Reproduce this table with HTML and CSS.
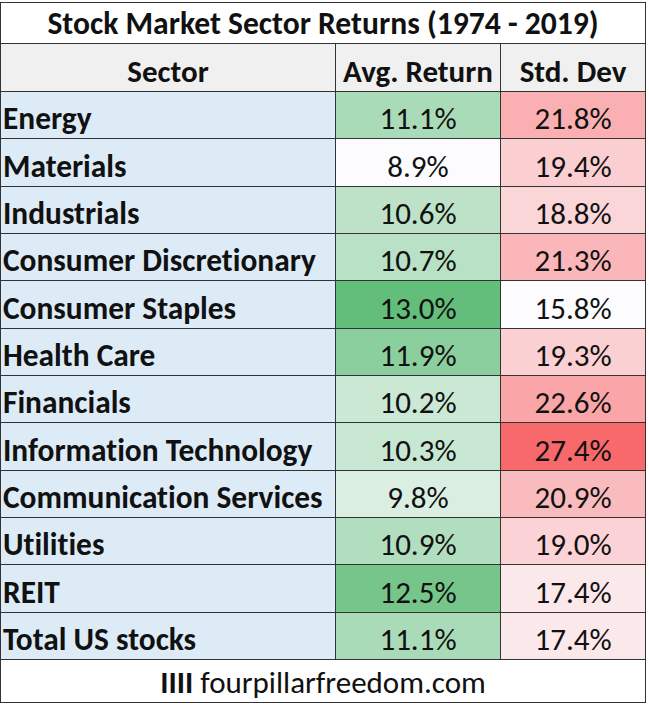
FILE: index.html
```html
<!DOCTYPE html>
<html>
<head>
<meta charset="utf-8">
<link rel="stylesheet" href="styles.css">
</head>
<body>
<table class="sheet">
  <colgroup>
    <col class="c-sector">
    <col class="c-ret">
    <col class="c-dev">
  </colgroup>
  <tr class="title"><td colspan="3">Stock Market Sector Returns (1974 - 2019)</td></tr>
  <tr class="head"><th>Sector</th><th>Avg. Return</th><th>Std. Dev</th></tr>
  <tr><td class="sector">Energy</td><td class="num" style="background:#aadbb8">11.1%</td><td class="num" style="background:#fab0b2">21.8%</td></tr>
  <tr><td class="sector">Materials</td><td class="num" style="background:#fcfcff">8.9%</td><td class="num" style="background:#fbced1">19.4%</td></tr>
  <tr><td class="sector">Industrials</td><td class="num" style="background:#bde2c8">10.6%</td><td class="num" style="background:#fbd6d9">18.8%</td></tr>
  <tr><td class="sector">Consumer Discretionary</td><td class="num" style="background:#b9e1c5">10.7%</td><td class="num" style="background:#fab6b9">21.3%</td></tr>
  <tr><td class="sector">Consumer Staples</td><td class="num" style="background:#63be7b">13.0%</td><td class="num" style="background:#fcfcff">15.8%</td></tr>
  <tr><td class="sector">Health Care</td><td class="num" style="background:#8ccf9e">11.9%</td><td class="num" style="background:#fbd0d2">19.3%</td></tr>
  <tr><td class="sector">Financials</td><td class="num" style="background:#cbe8d5">10.2%</td><td class="num" style="background:#faa6a8">22.6%</td></tr>
  <tr><td class="sector">Information Technology</td><td class="num" style="background:#c8e7d2">10.3%</td><td class="num" style="background:#f8696b">27.4%</td></tr>
  <tr><td class="sector">Communication Services</td><td class="num" style="background:#daeee2">9.8%</td><td class="num" style="background:#fabbbe">20.9%</td></tr>
  <tr><td class="sector">Utilities</td><td class="num" style="background:#b1debf">10.9%</td><td class="num" style="background:#fbd3d6">19.0%</td></tr>
  <tr><td class="sector">REIT</td><td class="num" style="background:#76c68b">12.5%</td><td class="num" style="background:#fbe8eb">17.4%</td></tr>
  <tr><td class="sector">Total US stocks</td><td class="num" style="background:#aadbb8">11.1%</td><td class="num" style="background:#fbe8eb">17.4%</td></tr>
  <tr class="foot"><td colspan="3"><b>IIII</b> fourpillarfreedom.com</td></tr>
</table>
</body>
</html>
```

FILE: styles.css
```css
html, body {
  margin: 0;
  padding: 0;
  background: #ffffff;
}

body {
  padding-top: 2px;
  font-family: Carlito, Calibri, Lato, sans-serif;
  font-variant-ligatures: none;
  color: #111111;
}

.sheet {
  border-collapse: collapse;
  table-layout: fixed;
  width: 645px;
  border: 1px solid #555555;
}

.c-sector { width: 335px; }
.c-ret { width: 165px; }
.c-dev { width: 145px; }

.sheet td,
.sheet th {
  border: 1px solid #333333;
  padding: 0 4px 2px 4px;
  font-size: 31px;
  line-height: 36px;
  vertical-align: bottom;
  white-space: nowrap;
  overflow: hidden;
}

.title td {
  height: 38px;
  text-align: center;
  font-weight: bold;
  font-size: 31.6px;
  background: #ffffff;
}

.head th {
  height: 45px;
  background: #f0f0f0;
  font-weight: bold;
  text-align: center;
}

.sheet .sector {
  height: 44.33px;
  padding-left: 2px;
  background: #ddebf7;
  font-weight: bold;
  text-align: left;
  font-size: 31.4px;
}

.num {
  text-align: center;
}

.foot td {
  height: 40px;
  text-align: center;
  background: #ffffff;
}
```
